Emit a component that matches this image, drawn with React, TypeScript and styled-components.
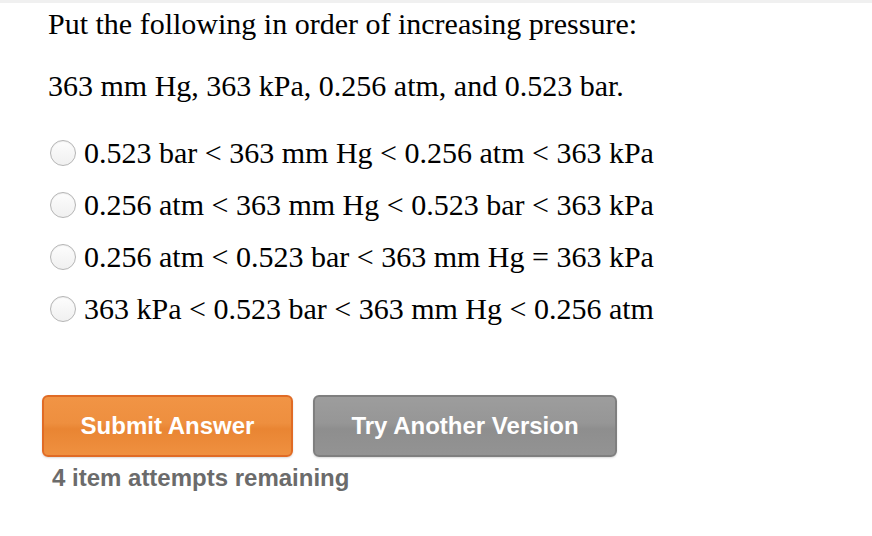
import { createGlobalStyle, styled } from "styled-components";

const GlobalStyle = createGlobalStyle`
  html, body {
    margin: 0;
    padding: 0;
    background: #fff;
  }
`;

const Page = styled.div`
  border-top: 3px solid #f0f0f0;
  padding: 0 0 0 48px;
  font-family: "Liberation Serif", "Times New Roman", serif;
  color: #000;
`;

const Prompt = styled.p`
  margin: 0;
  font-size: 30px;
  line-height: 34px;
  padding-top: 4px;
`;

const Values = styled.p`
  margin: 0;
  font-size: 30px;
  line-height: 34px;
  padding-top: 28px;
`;

const OptionList = styled.div`
  display: flex;
  flex-direction: column;
  gap: 18px;
  margin-top: 33px;
`;

const Option = styled.label`
  display: flex;
  align-items: center;
  gap: 8px;
  height: 34px;
  font-size: 30px;
  cursor: pointer;
`;

const Radio = styled.span`
  width: 26px;
  height: 26px;
  margin-left: 2px;
  border-radius: 50%;
  border: 1px solid #b5b5b5;
  background: linear-gradient(#fdfdfd, #f0f0f0);
  box-shadow: inset 0 1px 1px rgba(0, 0, 0, 0.06);
  box-sizing: border-box;
  flex: none;
`;

const Actions = styled.div`
  display: flex;
  gap: 20px;
  margin-top: 69px;
  margin-left: -6px;
`;

const Button = styled.button<{ $tone: "orange" | "gray" }>`
  height: 62px;
  box-sizing: border-box;
  border-radius: 6px;
  font-family: "Liberation Sans", Arial, sans-serif;
  font-weight: bold;
  font-size: 24px;
  color: #fff;
  cursor: pointer;
  padding: 0;
  border: 2px solid ${(p) => (p.$tone === "orange" ? "#e06b25" : "#7f7f7f")};
  background: ${(p) =>
    p.$tone === "orange"
      ? "linear-gradient(#f19445 0%, #ee8f3f 45%, #e98533 55%, #ef9040 100%)"
      : "linear-gradient(#9d9d9d 0%, #969696 45%, #8e8e8e 55%, #939393 100%)"};
  box-shadow: 0 1px 2px rgba(0, 0, 0, 0.15);
`;

const Remaining = styled.div`
  font-family: "Liberation Sans", Arial, sans-serif;
  font-weight: bold;
  font-size: 24px;
  line-height: 28px;
  color: #6b6b6b;
  margin: 7px 0 0 4px;
`;

const options = [
  "0.523 bar < 363 mm Hg < 0.256 atm < 363 kPa",
  "0.256 atm < 363 mm Hg < 0.523 bar < 363 kPa",
  "0.256 atm < 0.523 bar < 363 mm Hg = 363 kPa",
  "363 kPa < 0.523 bar < 363 mm Hg < 0.256 atm",
];

export default function App() {
  return (
    <>
      <GlobalStyle />
      <Page>
        <Prompt>Put the following in order of increasing pressure:</Prompt>
        <Values>363 mm Hg, 363 kPa, 0.256 atm, and 0.523 bar.</Values>
        <OptionList>
          {options.map((o) => (
            <Option key={o}>
              <Radio />
              {o}
            </Option>
          ))}
        </OptionList>
        <Actions>
          <Button $tone="orange" style={{ width: 251 }}>
            Submit Answer
          </Button>
          <Button $tone="gray" style={{ width: 304 }}>
            Try Another Version
          </Button>
        </Actions>
        <Remaining>4 item attempts remaining</Remaining>
      </Page>
    </>
  );
}
